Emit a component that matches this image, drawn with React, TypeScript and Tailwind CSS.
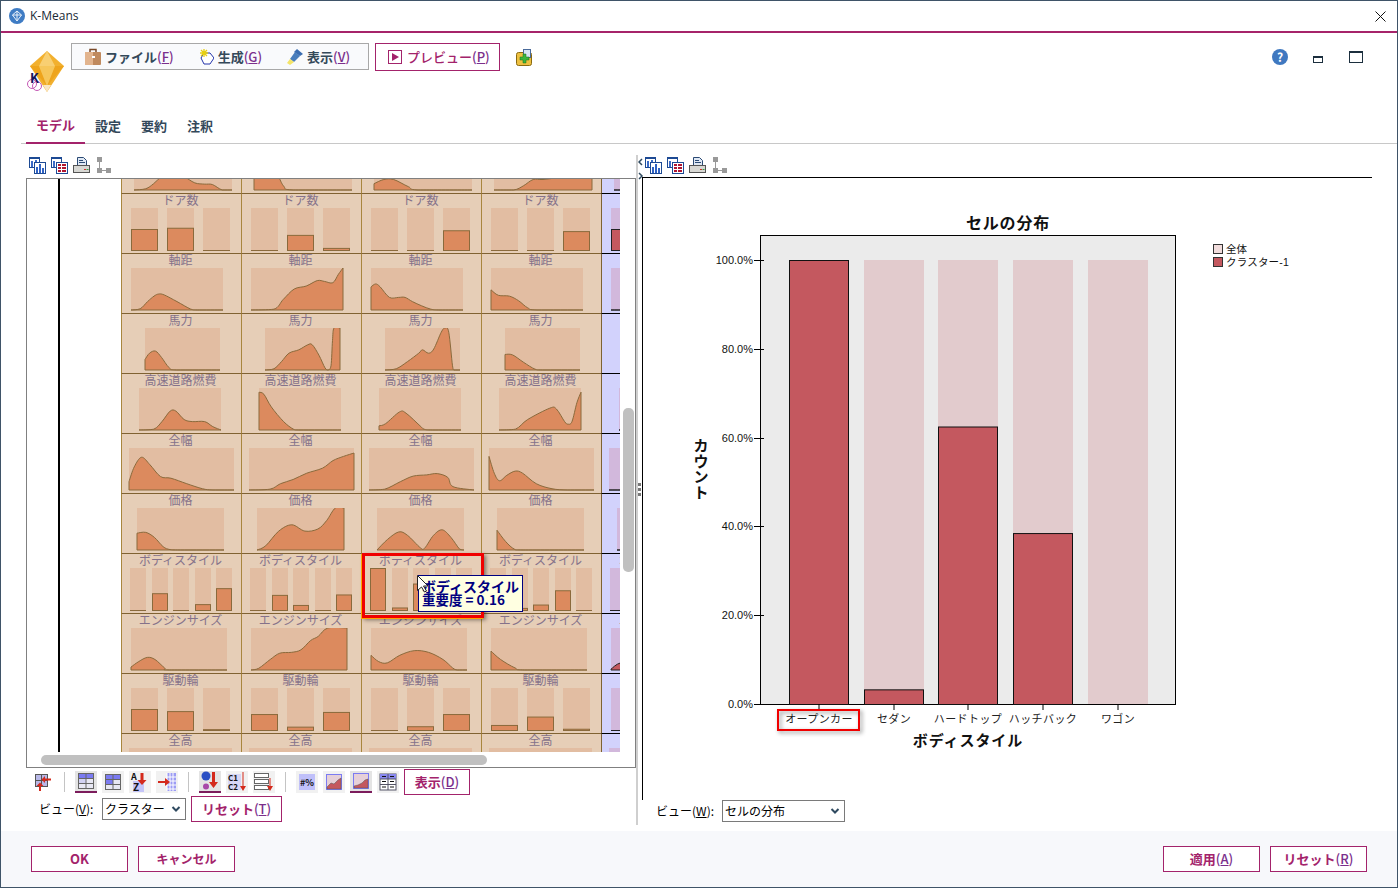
import React from "react";

type P = [number, number];
const H = 42;

function curvePath(pts: P[], x0: number, w: number) {
  const c = pts.map(([x, y]) => [x0 + x * w, H - y * H] as P);
  let d = `M${c[0][0]} ${H} L${c[0][0]} ${c[0][1]}`;
  for (let i = 0; i < c.length - 1; i++) {
    const a = c[Math.max(0, i - 1)], b = c[i], e = c[i + 1], f = c[Math.min(c.length - 1, i + 2)];
    const y1 = Math.min(H, b[1] + (e[1] - a[1]) / 6), y2 = Math.min(H, e[1] - (f[1] - b[1]) / 6);
    d += ` C${b[0] + (e[0] - a[0]) / 6} ${y1} ${e[0] - (f[0] - b[0]) / 6} ${y2} ${e[0]} ${e[1]}`;
  }
  return d + ` L${c[c.length - 1][0]} ${H} Z`;
}

const Z: P[] = [[0, 0], [1, 0]];
type Row = { label: string; x0?: number; w?: number; slots?: [number, number][]; cols: any[] };
const B3: [number, number][] = [[11, 38], [47, 74], [83, 110]];
const B5: [number, number][] = [[10, 26], [32, 48], [53, 69], [75, 91], [96, 112]];

const rows: Row[] = [
  { label: "", x0: 14, w: 98, cols: [
    [[0,0],[.12,.03],[.2,.15],[.28,.32],[.36,.42],[.5,.33],[.62,.17],[.72,.14],[.8,.13],[.9,0],[1,0]],
    [[0,.6],[.2,.5],[.3,.1],[.4,0],[1,0]],
    [[0,.15],[.1,.25],[.2,.25],[.35,.08],[.45,0],[1,0]],
    [[0,0],[.2,0],[.3,.1],[.4,.25],[.5,.25],[.7,.3],[1,.32]],
    Z ] },
  { label: "ドア数", slots: B3, cols: [[.5,.53,0],[0,.36,.05],[0,0,.47],[0,0,.45],[.5,0,0]] },
  { label: "軸距", x0: 11, w: 92, cols: [
    [[0,0],[.1,.03],[.18,.2],[.25,.33],[.3,.38],[.36,.36],[.5,.2],[.65,.02],[.72,0],[1,0]],
    [[0,0],[.25,.02],[.35,.25],[.47,.5],[.6,.57],[.72,.7],[.8,.68],[.89,.65],[.95,.85],[1,1]],
    [[0,.55],[.05,.62],[.1,.55],[.2,.3],[.3,.3],[.37,.3],[.45,.2],[.55,.1],[.65,.02],[.75,0],[1,0]],
    [[0,.48],[.08,.35],[.2,.33],[.3,.22],[.4,.05],[.5,0],[1,0]],
    Z ] },
  { label: "馬力", x0: 25, w: 75, cols: [
    [[0,.25],[.06,.4],[.14,.45],[.22,.3],[.32,.06],[.42,0],[1,0]],
    [[0,0],[.12,.03],[.22,.2],[.32,.4],[.45,.48],[.57,.6],[.63,.6],[.72,.35],[.8,.05],[.84,0],[.88,.1],[.9,.7],[.92,1],[1,1]],
    [[0,0],[.15,.03],[.3,.2],[.45,.4],[.5,.48],[.58,.4],[.65,.5],[.75,.9],[.8,1],[.85,.9],[.9,.1],[.92,0],[1,0]],
    [[0,.37],[.1,.36],[.25,.18],[.4,.02],[.5,0],[1,0]],
    Z ] },
  { label: "高速道路燃費", x0: 19, w: 82, cols: [
    [[0,0],[.18,.02],[.28,.2],[.38,.45],[.45,.45],[.55,.25],[.65,.2],[.8,.2],[.9,.08],[1,0]],
    [[0,.9],[.06,.85],[.15,.55],[.3,.2],[.42,.02],[.5,0],[1,0]],
    [[0,.1],[.08,.15],[.25,.43],[.33,.4],[.5,.1],[.55,.02],[.65,0],[1,0]],
    [[0,0],[.2,.02],[.35,.25],[.62,.52],[.7,.5],[.8,.2],[.84,.14],[.89,.2],[.95,.65],[1,.9]],
    Z ] },
  { label: "全幅", x0: 9, w: 105, cols: [
    [[0,.2],[.05,.55],[.12,.78],[.2,.6],[.3,.32],[.4,.28],[.55,.15],[.7,.03],[.8,0],[1,0]],
    [[0,0],[.2,.02],[.3,.15],[.42,.25],[.55,.4],[.7,.52],[.8,.7],[.9,.8],[1,.88]],
    [[0,0],[.15,.02],[.3,.2],[.42,.33],[.55,.36],[.65,.39],[.75,.3],[.8,.08],[1,0]],
    [[0,.8],[.05,.4],[.1,.22],[.17,.35],[.25,.45],[.32,.4],[.45,.15],[.6,.03],[.75,0],[1,0]],
    Z ] },
  { label: "価格", x0: 17, w: 87, cols: [
    [[0,.4],[.1,.42],[.2,.3],[.3,.08],[.38,.01],[.5,0],[1,0]],
    [[0,0],[.1,.1],[.25,.45],[.4,.6],[.55,.45],[.7,.5],[.8,.7],[.9,1],[1,1]],
    [[0,0],[.12,.25],[.25,.43],[.35,.35],[.5,.05],[.55,.05],[.65,.35],[.75,.48],[.85,.3],[.95,.02],[1,0]],
    [[0,.47],[.1,.2],[.2,.02],[.3,0],[1,0]],
    Z ] },
  { label: "ボディスタイル", slots: B5, cols: [[0,.4,0,.14,.52],[0,.36,.12,0,.37],[1,.06,.63,.1,.1],[0,.05,.13,.47,0],[0,0,0,0,0]] },
  { label: "エンジンサイズ", x0: 11, w: 96, cols: [
    [[0,.07],[.08,.2],[.17,.3],[.25,.25],[.35,.05],[.4,0],[1,0]],
    [[0,0],[.08,.04],[.2,.25],[.3,.4],[.42,.42],[.52,.48],[.62,.7],[.7,.8],[.8,1],[1,1]],
    [[0,.35],[.08,.2],[.17,.17],[.3,.35],[.45,.46],[.6,.42],[.75,.25],[.85,.05],[.9,0],[1,0]],
    [[0,.45],[.1,.25],[.25,.05],[.35,0],[1,0]],
    [[0,.02],[.1,.17],[.3,.2],[1,0]] ] },
  { label: "駆動輪", slots: B3, cols: [[.5,.45,.02],[.38,.08,.43],[0,.09,.38],[.12,.32,.03],[0,0,0]] },
  { label: "全高", x0: 9, w: 103, cols: [Z, Z, Z, Z, Z] },
];

function Chart({ row, col }: { row: Row; col: number }) {
  const last = col === 4;
  const bg = last ? "#d2b8dc" : "#e2bda2";
  const fill = last ? "#c4585f" : "#dc8a5e";
  const stroke = last ? "#222222" : "#8a6a3c";
  const data = row.cols[col];
  return (
    <svg width={120} height={44} className="ml-[-2px] block">
      {row.slots
        ? row.slots.map(([a, b], i) => {
            const h = data[i] * H;
            return (
              <g key={i}>
                <rect x={a} y={0} width={b - a} height={H} fill={bg} />
                {h > 0 ? (
                  <rect x={a + 0.5} y={H - h + 0.5} width={b - a - 1} height={h} fill={fill} stroke={stroke} />
                ) : (
                  <line x1={a} x2={b} y1={H + 0.5} y2={H + 0.5} stroke={stroke} />
                )}
              </g>
            );
          })
        : (
          <>
            <rect x={row.x0} y={0} width={row.w} height={H} fill={bg} />
            <path d={curvePath(data, row.x0!, row.w!)} fill={fill} stroke={stroke} />
          </>
        )}
    </svg>
  );
}

function Cell({ row, col, children }: { row: Row; col: number; children?: React.ReactNode }) {
  const last = col === 4;
  return (
    <div className={last ? "relative h-[60px] w-[120px] overflow-hidden border-t border-t-black border-l border-l-[#7d6232] bg-[#d2d2fc]" : "relative h-[60px] w-[120px] border-t border-t-[#806232] border-l border-l-[#a8863e] bg-[#e6ceb7]"}>
      <div className="h-[14px] pr-[2px] text-center text-[12px] leading-[12px] text-[#85728a]">{row.label}</div>
      <Chart row={row} col={col} />
      {children}
    </div>
  );
}

/* ---------- icons ---------- */
const ChartCopy = () => (
  <svg width="17" height="17" viewBox="0 0 17 17">
    <rect x="0.5" y="0.5" width="10" height="10" fill="#fff" stroke="#1d4a94" />
    <rect x="0" y="0" width="11" height="2" fill="#1d4a94" />
    <rect x="2" y="4" width="2" height="6" fill="#3c6cc8" /><rect x="6" y="3" width="2" height="7" fill="#3c6cc8" />
    <rect x="5.5" y="5.5" width="11" height="11" fill="#fff" stroke="#1d4a94" />
    <rect x="7" y="10" width="2" height="6" fill="#2f62c4" /><rect x="10" y="7" width="2" height="9" fill="#2f62c4" /><rect x="13" y="11" width="2" height="5" fill="#2f62c4" />
  </svg>
);
const TableCopy = () => (
  <svg width="17" height="17" viewBox="0 0 17 17">
    <rect x="0.5" y="0.5" width="10" height="10" fill="#fff" stroke="#1d4a94" />
    <rect x="0" y="0" width="11" height="2" fill="#1d4a94" />
    <rect x="2" y="4" width="2" height="6" fill="#3c6cc8" />
    <rect x="5.5" y="5.5" width="11" height="11" fill="#fff" stroke="#1d4a94" />
    <g fill="#b01530"><rect x="7" y="7" width="3" height="2" /><rect x="11" y="7" width="4" height="2" /><rect x="7" y="10" width="3" height="2" /><rect x="11" y="10" width="4" height="2" /><rect x="7" y="13" width="3" height="2" /><rect x="11" y="13" width="4" height="2" /></g>
  </svg>
);
const Printer = () => (
  <svg width="17" height="17" viewBox="0 0 17 17">
    <path d="M4.5 .5h6l3 3v5h-9z" fill="#dfe8f4" stroke="#2b4a74" />
    <rect x="6" y="3" width="4" height="1" fill="#2b4a74" /><rect x="6" y="5" width="6" height="1" fill="#2b4a74" />
    <rect x=".5" y="8.5" width="16" height="7" fill="#d8d8d4" stroke="#555" />
    <rect x="11" y="12" width="2" height="1" fill="#d03030" /><rect x="13.5" y="12" width="2" height="1" fill="#30a040" />
  </svg>
);
const Tree = () => (
  <svg width="17" height="17" viewBox="0 0 17 17">
    <rect x="2" y="0" width="5" height="5" fill="#999" /><rect x="2" y="11" width="5" height="5" fill="#999" /><rect x="11" y="11" width="5" height="5" fill="#999" />
    <path d="M4.5 5v6M7 13.5h4" stroke="#999" />
  </svg>
);
const ViewTools = () => (
  <div className="flex items-center gap-[5px]">
    <ChartCopy /><TableCopy /><Printer /><Tree />
  </div>
);

const TB = ({ children, active }: { children: React.ReactNode; active?: boolean }) => (
  <div className={active ? "flex h-[22px] w-[22px] items-center justify-center border-b-2 border-b-[#7c1c5c] bg-[#e4e4e4]" : "flex h-[22px] w-[22px] items-center justify-center bg-[#f1f1f1]"}>{children}</div>
);
const Sep = () => <div className="h-[20px] w-px bg-[#c4c4c4]" />;
const GridIc = ({ dark }: { dark?: boolean }) => (
  <svg width="16" height="16" viewBox="0 0 16 16">
    <rect x=".5" y=".5" width="15" height="15" fill="#e8e8f4" stroke="#666" />
    <rect x="1" y="1" width="14" height="5" fill="#7b7bf2" />
    <rect x="1" y="6" width="7" height="5" fill="#7b7bf2" opacity={dark ? 1 : 0.2} />
    <path d="M0 5.5h16M0 10.5h16M8 0v16" stroke="#666" />
  </svg>
);
const Arrow = ({ x = 11, y = 1, h = 12 }: { x?: number; y?: number; h?: number }) => (
  <path d={`M${x} ${y}h3v${h - 5}h3l-4.5 5-4.5-5h3z`} fill="#d42a1c" />
);

function Bottom() {
  return (
    <div className="flex h-[28px] items-center pl-[9px]">
      <svg width="16" height="17" viewBox="0 0 16 17">
        <rect x=".5" y=".5" width="12" height="12" fill="#b8b8e8" stroke="#555" />
        <path d="M0 6.5h13M6.5 0v13" stroke="#555" />
        <path d="M16 4.500H10V2L6.500 5.500 10 9V6.500h6zM5 8.500L1.500 12H4v5h2v-5h2.500z" fill="#d42a1c" />
      </svg>
      <div className="ml-[13px]"><Sep /></div>
      <div className="ml-[10px] flex gap-[5px]">
        <TB active><GridIc /></TB>
        <TB><GridIc dark /></TB>
        <TB>
          <svg width="20" height="20" viewBox="0 0 20 20">
            <rect x="3" y="9" width="11" height="11" fill="#c4c4f8" />
            <text x="1" y="8" fontSize="9" fontWeight="700" fill="#111">A</text>
            <text x="3" y="19" fontSize="10" fontWeight="700" fill="#111">Z</text>
            <Arrow x={10.5} y={1} h={12} />
          </svg>
        </TB>
        <TB>
          <svg width="20" height="20" viewBox="0 0 20 20">
            <rect x="10" y="1" width="9" height="18" fill="#9c9cf4" />
            <path d="M10 1v18M13 1v18M16 1v18M10 5h9M10 9h9M10 13h9M10 17h9" stroke="#fff" />
            <path d="M1 9h7V6l5 4-5 4v-3H1z" fill="#d42a1c" />
          </svg>
        </TB>
      </div>
      <div className="ml-[10px]"><Sep /></div>
      <div className="ml-[10px] flex gap-[5px]">
        <TB active>
          <svg width="20" height="20" viewBox="0 0 20 20">
            <circle cx="6" cy="5" r="4.5" fill="#2a4fc4" /><circle cx="6" cy="15.5" r="3" fill="#a848a8" />
            <path d="M12 1h3v10h3l-4.5 6-4.500-6h3z" fill="#d42a1c" />
          </svg>
        </TB>
        <TB>
          <svg width="20" height="20" viewBox="0 0 20 20">
            <rect x="1" y="2" width="13" height="16" fill="#c4c4f8" opacity=".6" />
            <text x="1" y="9" fontSize="8" fontWeight="700" fill="#111">C1</text>
            <text x="1" y="18" fontSize="8" fontWeight="700" fill="#111">C2</text>
            <path d="M15.5 0h1v14h2.500l-3 5-3-5h2.500z" fill="#d42a1c" />
          </svg>
        </TB>
        <TB>
          <svg width="20" height="20" viewBox="0 0 20 20">
            <rect x=".5" y="1.5" width="14" height="4" fill="#fff" stroke="#666" /><rect x=".5" y="7.5" width="14" height="4" fill="#fff" stroke="#666" /><rect x=".5" y="13.5" width="14" height="4" fill="#fff" stroke="#666" />
            <path d="M15.5 6h1v8h2.500l-3 5-3-5h2.500z" fill="#d42a1c" />
          </svg>
        </TB>
      </div>
      <div className="ml-[10px]"><Sep /></div>
      <div className="ml-[10px] flex gap-[5px]">
        <TB>
          <div className="flex h-[16px] w-[16px] items-center justify-center bg-[#c0c0fa] text-[9px] font-bold leading-none text-[#111]">#%</div>
        </TB>
        <TB>
          <svg width="16" height="16" viewBox="0 0 16 16">
            <rect x=".5" y=".5" width="15" height="15" fill="#e6d0d8" stroke="#7b7bf2" />
            <path d="M1 15V13L5 9l3 1 4-4 3-2v11z" fill="#c4585f" stroke="#555" strokeWidth=".5" />
          </svg>
        </TB>
        <TB active>
          <svg width="16" height="16" viewBox="0 0 16 16">
            <rect x=".5" y=".5" width="15" height="15" fill="#e6d0d8" stroke="#7b7bf2" />
            <path d="M1 15V13L5 12l4-2 3-3 3-1v9z" fill="#c4585f" stroke="#555" strokeWidth=".5" />
          </svg>
        </TB>
        <TB>
          <svg width="18" height="18" viewBox="0 0 18 18">
            <rect x="1" y="1" width="16" height="16" fill="#fff" stroke="#556" />
            <rect x="1" y="1" width="16" height="5" fill="#8888f0" />
            <path d="M1 6h16M1 11.5h16M9 1v16" stroke="#556" />
            <path d="M3 3.500h4M11 3.500h4M3 8.500h4M11 8.500h4M3 14h4M11 14h4" stroke="#111" />
          </svg>
        </TB>
      </div>
      <Btn className="ml-[5px] w-[66px]">表示<M>(<u>D</u>)</M></Btn>
    </div>
  );
}

const M = ({ children }: { children: React.ReactNode }) => <span className="font-medium text-[#7b2f8c]">{children}</span>;
const Btn = ({ children, className }: { children: React.ReactNode; className: string }) => (
  <div className={`flex h-[26px] items-center justify-center border border-[#a3236b] bg-white text-[13px] font-bold text-[#a3236b] ${className}`}><span>{children}</span></div>
);

const Chevron = () => (
  <svg width="12" height="12" viewBox="0 0 12 12" className="ml-auto mr-[3px]"><path d="M2.500 4L6 7.500 9.500 4" fill="none" stroke="#2f4a60" strokeWidth="2" /></svg>
);

const Select = ({ text, w }: { text: string; w: string }) => (
  <div className={`flex h-[22px] items-center border border-[#7a7a7a] bg-white pl-[2px] text-[12px] text-black ${w}`}>
    <span>{text}</span><Chevron />
  </div>
);

const XL = ["オープンカー", "セダン", "ハードトップ", "ハッチバック", "ワゴン"];
const barsX = [789, 864, 938, 1013, 1088];
const vals = [100, 3.3, 62.5, 38.5, 0];
const py = (v: number) => 704 - (v / 100) * 444;

function BigChart() {
  return (
    <svg viewBox="643 178 729 622" width={729} height={622} className="block font-['Liberation_Sans','Noto_Sans_CJK_JP',sans-serif]">
      <text x="1008" y="229" textAnchor="middle" fontSize="16" letterSpacing=".8" fontWeight="700" fill="#111">セルの分布</text>
      <rect x="760.5" y="235.5" width="415" height="469" fill="#ebebeb" stroke="#000" />
      {barsX.map((x, i) => (
        <g key={i}>
          <rect x={x} y={260} width={60} height={444} fill="#e2cbcd" />
          {vals[i] > 0 && <rect x={x + 0.5} y={py(vals[i]) + 0.5} width={59} height={704 - py(vals[i])} fill="#c4585f" stroke="#111" />}
          <line x1={x + 30} x2={x + 30} y1={704} y2={710} stroke="#000" />
          <text x={x + 30} y={723} textAnchor="middle" fontSize="11" letterSpacing=".4" fill="#222">{XL[i]}</text>
        </g>
      ))}
      <rect x="778" y="710" width="81" height="20" fill="none" stroke="#f00000" strokeWidth="2" className="drop-shadow-[2px_2px_2px_rgba(0,0,0,0.45)]" />
      {[0, 20, 40, 60, 80, 100].map((v) => (
        <g key={v}>
          <line x1={754} x2={764} y1={Math.round(py(v)) + 0.5} y2={Math.round(py(v)) + 0.5} stroke="#000" />
          <text x={753} y={py(v) + 4} textAnchor="end" fontSize="11" fill="#111">{v}.0%</text>
        </g>
      ))}
      <text x="968" y="746" textAnchor="middle" fontSize="15" fontWeight="700" letterSpacing=".9" fill="#111">ボディスタイル</text>
      {["カ", "ウ", "ン", "ト"].map((c, i) => (
        <text key={c} x="701" y={451 + i * 15.5} textAnchor="middle" fontSize="15" fontWeight="700" fill="#111">{c}</text>
      ))}
      <rect x="1213.5" y="244.5" width="9" height="9" fill="#f1dcdc" stroke="#333" />
      <rect x="1213.5" y="257.5" width="9" height="9" fill="#c4585f" stroke="#333" />
      <text x="1226" y="253" fontSize="10.5" fill="#111">全体</text>
      <text x="1226" y="266" fontSize="10.5" letterSpacing=".2" fill="#111">クラスター-1</text>
    </svg>
  );
}

export default function App() {
  return (
    <div className="flex h-[888px] w-[1398px] flex-col overflow-hidden border border-[#3f5468] bg-white font-['Noto_Sans_CJK_JP','Liberation_Sans',sans-serif]">
      {/* title bar */}
      <div className="flex h-[30px] items-center pl-[8px] pr-[8px]">
        <svg width="16" height="16" viewBox="0 0 16 16">
          <circle cx="8" cy="8" r="8" fill="#3f7cc4" />
          <path d="M8 3l4.500 4L8 13 3.500 7zM3.500 7h9M8 3v10" fill="none" stroke="#e8f0fa" />
        </svg>
        <span className="ml-[5px] font-['Open_Sans',sans-serif] text-[12px] text-[#1a2a36]">K-Means</span>
        <svg width="11" height="11" viewBox="0 0 11 11" className="ml-auto mr-[3px]"><path d="M.5.500l10 10M10.500.500l-10 10" stroke="#111" /></svg>
      </div>
      <div className="h-[2px] bg-[#a6246a]" />

      {/* header */}
      <div className="flex h-[79px] pl-[26px] pr-[34px] pt-[10px]">
        <div className="relative mt-[8px] h-[41px] w-[36px] shrink-0">
          <svg width="37" height="41" viewBox="0 0 37 41">
            <path d="M20 0L37 15 20 41 3 15z" fill="#f2b02e" />
            <path d="M20 0L12 15h16z" fill="#f8cf72" />
            <path d="M3 15h9l8 20zM37 15h-9l-8 20z" fill="#eea41c" />
            <path d="M12 15L20 35 28 15z" fill="#f6c65a" />
            <path d="M16 34l4 7 4-7z" fill="#f9e6c4" />
          </svg>
          <svg width="16" height="14" viewBox="0 0 16 14" className="absolute bottom-[1px] left-[0px]">
            <circle cx="5" cy="7" r="4.500" fill="none" stroke="#c458b4" />
            <circle cx="10" cy="9" r="4.500" fill="none" stroke="#c458b4" />
          </svg>
          <div className="absolute bottom-[8px] left-[3px] text-[13px] font-bold leading-none text-[#14145c]">K</div>
        </div>
        <div className="ml-[8px] flex h-[27px] w-[298px] items-center border border-[#a8a8a8] bg-[#f9fafc] text-[13px] font-bold text-[#34495a]">
          <span className="ml-[13px] flex items-center gap-[4px]">
            <svg width="16" height="17" viewBox="0 0 16 17">
              <path d="M5 4V1.500h6V4" fill="none" stroke="#7a4a28" strokeWidth="1.500" />
              <rect x="0" y="4" width="16" height="13" rx="1" fill="#c08a5e" />
              <rect x="0" y="4" width="8" height="13" fill="#e2b48e" /><rect x="7" y="8" width="3" height="2" fill="#fff" />
            </svg>
            <span>ファイル<M>(<u>F</u>)</M></span>
          </span>
          <span className="ml-[26px] flex items-center gap-[4px]">
            <svg width="14" height="16" viewBox="0 0 14 16">
              <path d="M4 4h6l4 5-4 6H4L1 9z" fill="#fff" stroke="#2233aa" />
              <path d="M4 0v8M0 4h8M1 1l6 6M7 1L1 7" stroke="#e8d010" strokeWidth="1.300" />
            </svg>
            <span>生成<M>(<u>G</u>)</M></span>
          </span>
          <span className="ml-[25px] flex items-center gap-[4px]">
            <svg width="16" height="16" viewBox="0 0 16 16">
              <path d="M10 0l6 5-3 2-6-4z" fill="#3a6cb0" />
              <path d="M8 3l5 4-6 6-4-3z" fill="#4a7ebc" />
              <path d="M3 10l4 3-4 3-3-2z" fill="#f4e468" />
            </svg>
            <span>表示<M>(<u>V</u>)</M></span>
          </span>
        </div>
        <div className="ml-[6px] flex h-[28px] w-[125px] items-center border border-[#a3236b] text-[13px] font-medium text-[#a3236b]">
          <svg width="14" height="14" viewBox="0 0 14 14" className="ml-[12px] mr-[5px]"><rect x=".5" y=".5" width="13" height="13" fill="none" stroke="#a3236b" /><path d="M4 3l7 4-7 4z" fill="#a3236b" /></svg>
          <span>プレビュー<M>(<u>P</u>)</M></span>
        </div>
        <svg width="16" height="17" viewBox="0 0 16 17" className="ml-[16px] mt-[6px]">
          <rect x="0.5" y="3.5" width="15" height="13" rx="2" fill="#eec040" stroke="#8a6a10" />
          <rect x="7.5" y="0.5" width="7" height="8" fill="#d8e4f4" stroke="#4a6a9a" />
          <path d="M7 5v3H4v3h3v3h3v-3h3V8h-3V5z" fill="#3cb43c" stroke="#187018" strokeWidth=".5" />
        </svg>
        <div className="ml-auto mt-[6px] flex items-start">
          <div className="flex h-[16px] w-[16px] items-center justify-center rounded-full bg-[#3f78c0] text-[12px] font-bold leading-none text-white">?</div>
          <svg width="10" height="7" viewBox="0 0 10 7" className="ml-[25px] mt-[7px]"><rect x=".5" y=".5" width="9" height="6" fill="#fff" stroke="#1c2f3e" /><rect width="10" height="2" fill="#1c2f3e" /></svg>
          <svg width="14" height="12" viewBox="0 0 14 12" className="ml-[26px] mt-[2px]"><rect x=".5" y=".5" width="13" height="11" fill="#fff" stroke="#1c2f3e" /><rect width="14" height="2" fill="#1c2f3e" /></svg>
        </div>
      </div>

      {/* tabs */}
      <div className="ml-[20px] flex h-[32px] items-end border-b border-[#c8c8c8] text-[13px] font-bold text-[#33485a]">
        <div className="mb-[-1px] ml-[5px] flex h-[32px] w-[59px] items-center justify-center border-b-2 border-b-[#a3236b] pb-[4px] text-[#a3236b]">モデル</div>
        <div className="ml-[10px] flex h-[31px] items-center pb-[4px]">設定</div>
        <div className="ml-[20px] flex h-[31px] items-center pb-[4px]">要約</div>
        <div className="ml-[20px] flex h-[31px] items-center pb-[4px]">注釈</div>
      </div>

      {/* main */}
      <div className="flex min-h-0 flex-1">
        <div className="ml-[25px] flex w-[610px] shrink-0 flex-col">
          <div className="h-[34px] pl-[3px] pt-[13px]"><ViewTools /></div>
          <div className="flex h-[590px] flex-col border border-[#808080]">
            <div className="flex h-[573px]">
              <div className="flex w-[593px] overflow-hidden">
                <div className="w-[94px] shrink-0"><div className="ml-[31px] h-full w-[2px] bg-black" /></div>
                <div className="mt-[-46px] w-[600px] shrink-0">
                  {rows.map((row, r) => (
                    <div key={r} className="flex">
                      {row.cols.map((_, c) => (
                        <Cell key={c} row={row} col={c}>
                          {r === 7 && c === 2 && (
                            <div className="absolute left-0 top-[-1px] z-10 h-[65px] w-[122px] border-[3px] border-[#f00000] shadow-[-1px_1px_0_#ffa500,2px_2px_4px_rgba(0,0,0,0.45)]">
                              <div className="absolute left-[53px] top-[19px] h-[37px] w-[105px] border border-[#000080] bg-[#ffffe1] pl-[3px] text-[14px] font-bold leading-[13px] text-[#000080]">
                                <div className="mt-[4px] whitespace-nowrap">ボディスタイル</div>
                                <div className="whitespace-nowrap text-[13.5px]">重要度 = 0.16</div>
                              </div>
                              <svg width="12" height="18" viewBox="0 0 12 18" className="absolute left-[52px] top-[19px]"><path d="M.5.500v15l4-3.500 3 5 2-1-3-5H11z" fill="#fff" stroke="#222" /></svg>
                            </div>
                          )}
                        </Cell>
                      ))}
                    </div>
                  ))}
                </div>
              </div>
              <div className="pl-[3px] pt-[229px]"><div className="h-[164px] w-[11px] rounded-[5px] bg-[#c0c0c0]" /></div>
            </div>
            <div className="pl-[14px] pt-[3px]"><div className="h-[10px] w-[446px] rounded-[5px] bg-[#c0c0c0]" /></div>
          </div>
          <Bottom />
          <div className="flex items-center pl-[13px]">
            <span className="w-[63px] text-[12px] text-black">ビュー<span>(<u>V</u>):</span></span>
            <Select text="クラスター" w="w-[84px]" />
            <Btn className="ml-[5px] w-[91px]">リセット<M>(<u>T</u>)</M></Btn>
          </div>
        </div>

        {/* splitter */}
        <div className="mb-[6px] mt-[11px] w-[6px] border-l-2 border-[#cfcfcf]">
          <svg width="6" height="22" viewBox="0 0 6 22" className="mt-[3px]"><path d="M4 1L1 4l3 3M1 15l3 3-3 3" fill="none" stroke="#2f4a60" strokeWidth="1.500" /></svg>
          <div className="mt-[303px] flex flex-col gap-[2px]">
            <div className="h-[3px] w-[3px] bg-[#777]" /><div className="h-[3px] w-[3px] bg-[#777]" /><div className="h-[3px] w-[3px] bg-[#777]" />
          </div>
        </div>

        <div className="flex w-[730px] shrink-0 flex-col">
          <div className="h-[33px] pl-[3px] pt-[13px]"><ViewTools /></div>
          <div className="h-[623px] border-l border-t border-l-black border-t-black">
            <BigChart />
          </div>
          <div className="flex items-center pl-[14px]">
            <span className="w-[66px] text-[12px] text-black">ビュー<span>(<u>W</u>):</span></span>
            <Select text="セルの分布" w="w-[123px]" />
          </div>
        </div>
      </div>

      {/* footer */}
      <div className="flex h-[56px] items-center justify-between bg-[#f7f8fb] pl-[30px] pr-[30px]">
        <div className="flex gap-[10px]">
          <Btn className="w-[97px]">OK</Btn>
          <Btn className="w-[97px]"><span className="text-[12px]">キャンセル</span></Btn>
        </div>
        <div className="flex gap-[10px]">
          <Btn className="w-[97px]">適用<M>(<u>A</u>)</M></Btn>
          <Btn className="w-[97px]">リセット<M>(<u>R</u>)</M></Btn>
        </div>
      </div>
    </div>
  );
}
